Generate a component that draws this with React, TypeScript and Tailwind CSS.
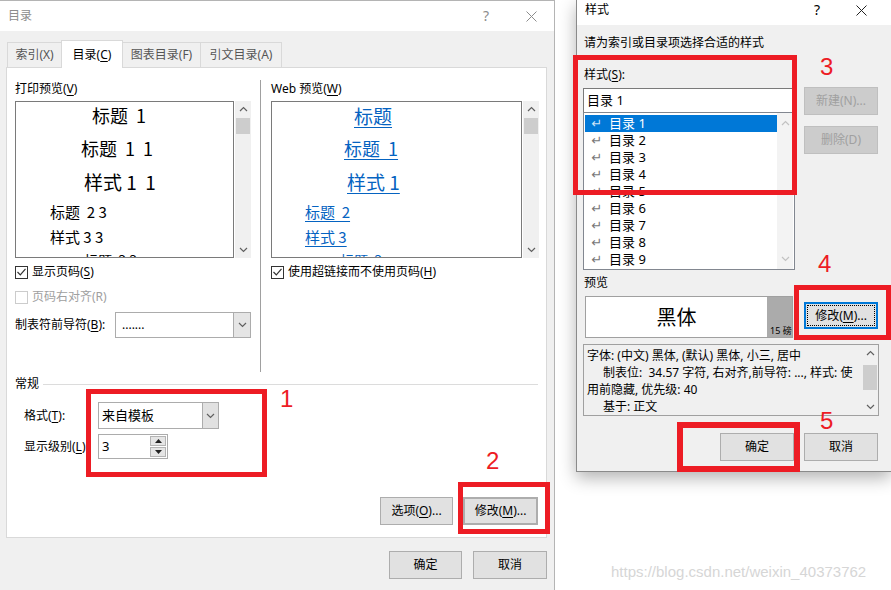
import React from "react";

type Dir = "up" | "down";

function Chevron({ dir, color = "#606060" }: { dir: Dir; color?: string }) {
  return (
    <svg width="9" height="6" viewBox="0 0 9 6">
      <polyline
        points={dir === "up" ? "1,5 4.5,1.5 8,5" : "1,1 4.5,4.5 8,1"}
        fill="none"
        stroke={color}
        strokeWidth="1.2"
      />
    </svg>
  );
}

function Close({ color }: { color: string }) {
  return (
    <svg width="11" height="11" viewBox="0 0 11 11">
      <path d="M0.5 0.5L10.5 10.5M10.5 0.5L0.5 10.5" stroke={color} strokeWidth="1" />
    </svg>
  );
}

function ScrollBar({
  thumb,
  arrow = "#606060",
  className = "",
}: {
  thumb?: string;
  arrow?: string;
  className?: string;
}) {
  return (
    <div className={`w-[16px] flex flex-col bg-[#f0f0f0] shrink-0 ${className}`}>
      <div className="h-[16px] flex items-center justify-center shrink-0">
        <Chevron dir="up" color={arrow} />
      </div>
      <div className="flex-1 flex flex-col items-center">
        {thumb && <div className={`w-[14px] bg-[#cdcdcd] ${thumb}`} />}
      </div>
      <div className="h-[16px] flex items-center justify-center shrink-0">
        <Chevron dir="down" color={arrow} />
      </div>
    </div>
  );
}

function Check({ checked, disabled }: { checked?: boolean; disabled?: boolean }) {
  return (
    <div
      className={`w-[13px] h-[13px] border bg-white flex items-center justify-center shrink-0 ${
        disabled ? "border-[#cccccc]" : "border-[#333333]"
      }`}
    >
      {checked && (
        <svg width="9" height="8" viewBox="0 0 9 8">
          <polyline points="0.5,4 3.3,6.8 8.5,0.8" fill="none" stroke="#333333" strokeWidth="1.2" />
        </svg>
      )}
    </div>
  );
}

function Btn({
  children,
  className = "",
  disabled,
}: {
  children: React.ReactNode;
  className?: string;
  disabled?: boolean;
}) {
  const look = disabled
    ? "bg-[#cccccc] border-[#bfbfbf] text-[#a0a0a0]"
    : "bg-[#e1e1e1] border-[#adadad] text-black";
  return (
    <div
      className={`h-[28px] flex items-center justify-center border text-[12px] leading-none shrink-0 ${look} ${className}`}
    >
      {children}
    </div>
  );
}

const U = ({ c }: { c: string }) => <span className="underline underline-offset-2">{c}</span>;

const line = "shrink-0 flex items-center";
// last preview line: only the top of the glyphs shows above the box edge
const cutLine = "shrink-0 flex items-start overflow-hidden h-[13px] pt-[9px]";

function LeftDialog() {
  return (
    <div className="w-[555px] h-[590px] shrink-0 flex flex-col bg-[#f0f0f0] border-t border-r border-[#b4b4b4]">
      {/* title */}
      <div className="h-[30px] bg-white flex items-center pl-[8px] pr-[13px] text-[12px] text-[#8c8c8c]">
        <span className="flex-1 leading-none">目录</span>
        <span className="w-[20px] text-center text-[14px] leading-none">?</span>
        <span className="w-[20px] ml-[25px] flex justify-center">
          <Close color="#8c8c8c" />
        </span>
      </div>

      {/* tabs */}
      <div className="h-[36px] flex items-end pl-[7px] text-[12px] leading-none">
        <div className="h-[25px] w-[55px] border border-b-0 border-[#d9d9d9] flex items-center justify-center text-[#555555]">
          索引(X)
        </div>
        <div className="h-[28px] w-[62px] -ml-px -mb-px relative z-10 border border-b-0 border-[#d9d9d9] bg-white flex items-center justify-center text-black">
          目录(<U c="C" />)
        </div>
        <div className="h-[25px] w-[79px] -ml-px border border-b-0 border-[#d9d9d9] flex items-center justify-center text-[#555555]">
          图表目录(F)
        </div>
        <div className="h-[25px] w-[82px] -ml-px border border-b-0 border-[#d9d9d9] flex items-center justify-center text-[#555555]">
          引文目录(A)
        </div>
      </div>

      {/* panel */}
      <div className="ml-[6px] w-[541px] h-[471px] bg-white border border-[#d9d9d9] flex flex-col text-[12px] text-black">
        <div className="flex h-[304px]">
          {/* print preview column */}
          <div className="ml-[8px] w-[236px] pt-[13px] flex flex-col">
            <div className="h-[16px] leading-[16px]">
              打印预览(<U c="V" />)
            </div>
            <div className="mt-[4px] flex h-[157px]">
              <div className="w-[219px] border border-[#7a7a7a] overflow-hidden flex flex-col font-['Noto_Sans_CJK_SC',sans-serif] leading-none">
                <div className={`${line} h-[26px] pl-[76px] text-[18px]`}>标题&nbsp; 1</div>
                <div className={`${line} h-[40px] pl-[65px] text-[18px]`}>标题&nbsp; 1&nbsp; 1</div>
                <div className={`${line} h-[26px] pl-[68px] text-[19px]`}>样式 1&nbsp; 1</div>
                <div className={`${line} h-[34px] pl-[34px] text-[15px]`}>标题&nbsp; 2 3</div>
                <div className={`${line} h-[16px] pl-[34px] text-[15px]`}>样式 3 3</div>
                <div className={`${cutLine} pl-[68px] text-[14px]`}>标题&nbsp; 3 3</div>
              </div>
              <ScrollBar className="ml-[1px]" thumb="mt-[1px] h-[16px]" />
            </div>
            <div className="mt-[6px] h-[16px] flex items-center gap-[4px] leading-none">
              <Check checked />
              <span>
                显示页码(<U c="S" />)
              </span>
            </div>
            <div className="mt-[9px] h-[16px] flex items-center gap-[4px] leading-none text-[#a0a0a0]">
              <Check disabled />
              <span>页码右对齐(R)</span>
            </div>
            <div className="mt-[7px] h-[26px] flex items-center leading-none">
              <span className="w-[100px]">
                制表符前导符(<U c="B" />):
              </span>
              <div className="w-[136px] h-[26px] border border-[#acacac] bg-white flex">
                <span className="flex-1 pl-[6px] flex items-center">.......</span>
                <div className="w-[17px] bg-[#e5e5e5] border-l border-[#acacac] flex items-center justify-center">
                  <Chevron dir="down" color="#606060" />
                </div>
              </div>
            </div>
          </div>

          <div className="ml-[9px] mt-[12px] w-px h-[292px] bg-[#a0a0a0]" />

          {/* web preview column */}
          <div className="ml-[10px] w-[268px] pt-[13px] flex flex-col">
            <div className="h-[16px] leading-[16px]">
              Web 预览(<U c="W" />)
            </div>
            <div className="mt-[4px] flex h-[157px]">
              <div className="w-[251px] border border-[#7a7a7a] overflow-hidden flex flex-col font-['Noto_Sans_CJK_SC',sans-serif] leading-none text-[#0563c1]">
                <div className={`${line} h-[26px] pl-[82px] text-[19px]`}>
                  <span className="underline underline-offset-3">标题</span>
                </div>
                <div className={`${line} h-[40px] pl-[72px] text-[18px]`}>
                  <span className="underline underline-offset-3">标题&nbsp; 1</span>
                </div>
                <div className={`${line} h-[26px] pl-[75px] text-[19px]`}>
                  <span className="underline underline-offset-3">样式 1</span>
                </div>
                <div className={`${line} h-[34px] pl-[33px] text-[15px]`}>
                  <span className="underline underline-offset-3">标题&nbsp; 2</span>
                </div>
                <div className={`${line} h-[16px] pl-[33px] text-[15px]`}>
                  <span className="underline underline-offset-3">样式 3</span>
                </div>
                <div className={`${cutLine} pl-[68px] text-[14px]`}>
                  <span className="underline underline-offset-3">标题&nbsp; 3</span>
                </div>
              </div>
              <ScrollBar className="ml-[1px]" thumb="mt-[1px] h-[16px]" />
            </div>
            <div className="mt-[6px] h-[16px] flex items-center gap-[4px] leading-none">
              <Check checked />
              <span>
                使用超链接而不使用页码(<U c="H" />)
              </span>
            </div>
          </div>
        </div>

        {/* general */}
        <div className="mt-[4px] h-[16px] flex items-center pl-[8px] leading-none">
          <span>常规</span>
          <div className="flex-1 h-px bg-[#dcdcdc] ml-[4px] mr-[8px]" />
        </div>
        <div className="mt-[10px] h-[27px] flex items-center pl-[17px] leading-none">
          <span className="w-[74px]">
            格式(<U c="T" />):
          </span>
          <div className="w-[121px] h-[27px] border border-[#acacac] bg-white flex">
            <span className="flex-1 pl-[3px] flex items-center text-[13px]">来自模板</span>
            <div className="w-[16px] bg-[#e1e1e1] border-l border-[#acacac] flex items-center justify-center">
              <Chevron dir="down" color="#606060" />
            </div>
          </div>
        </div>
        <div className="mt-[5px] h-[25px] flex items-center pl-[17px] leading-none">
          <span className="w-[74px]">
            显示级别(<U c="L" />):
          </span>
          <div className="w-[70px] h-[25px] border border-[#acacac] bg-white flex">
            <span className="flex-1 pl-[3px] flex items-center text-[13px]">3</span>
            <div className="w-[16px] my-[1px] mr-[1px] flex flex-col gap-px">
              <div className="flex-1 bg-[#e5e5e5] border border-[#b4b4b4] flex items-center justify-center">
                <svg width="7" height="4" viewBox="0 0 7 4">
                  <polygon points="0,4 3.5,0 7,4" fill="#222222" />
                </svg>
              </div>
              <div className="flex-1 bg-[#e5e5e5] border border-[#b4b4b4] flex items-center justify-center">
                <svg width="7" height="4" viewBox="0 0 7 4">
                  <polygon points="0,0 3.5,4 7,0" fill="#222222" />
                </svg>
              </div>
            </div>
          </div>
        </div>

        <div className="mt-[38px] flex justify-end gap-[10px] pr-[8px]">
          <Btn className="w-[73px]">
            选项(<U c="O" />)...
          </Btn>
          <Btn className="w-[75px] border-2 border-[#0078d7]">
            修改(<U c="M" />)...
          </Btn>
        </div>
      </div>

      <div className="mt-[13px] flex justify-end gap-[11px] pr-[7px]">
        <Btn className="w-[73px]">确定</Btn>
        <Btn className="w-[74px]">取消</Btn>
      </div>
    </div>
  );
}

function RightDialog() {
  const items = [1, 2, 3, 4, 5, 6, 7, 8, 9];
  return (
    <div className="w-[315px] h-[472px] shrink-0 flex flex-col bg-[#f0f0f0] border-l border-b border-[#8a8a8a] shadow-[0_6px_16px_rgba(0,0,0,0.3)] text-[12px] text-black">
      <div className="h-[25px] bg-white flex items-start pt-[2px] pl-[8px] pr-[20px] leading-[16px]">
        <span className="flex-1">样式</span>
        <span className="w-[20px] text-center text-[14px]">?</span>
        <span className="w-[20px] ml-[24px] h-[16px] flex items-center justify-center">
          <Close color="#222222" />
        </span>
      </div>

      <div className="flex flex-col pl-[7px] leading-none">
        <div className="mt-[10px] h-[16px] flex items-center">请为索引或目录项选择合适的样式</div>
        <div className="mt-[16px] h-[16px] flex items-center">
          样式(<U c="S" />):
        </div>

        <div className="mt-[5px] flex">
          <div className="-ml-px w-[212px] flex flex-col">
            <div className="w-[210px] h-[25px] border border-[#7a7a7a] bg-white flex items-center pl-[3px] text-[13px]">
              目录 1
            </div>
            <div className="-mt-px h-[158px] border border-[#828790] bg-white flex pl-px">
              <div className="w-[192px] pt-[2px] flex flex-col">
                {items.map((n) => (
                  <div
                    key={n}
                    className={`h-[17px] shrink-0 flex items-center ${n === 1 ? "bg-[#0078d7] text-white" : "text-black"}`}
                  >
                    <span
                      className={`w-[24px] text-center text-[13px] leading-none font-['DejaVu_Sans',sans-serif] ${
                        n === 1 ? "text-[#cfe3f6]" : "text-[#777777]"
                      }`}
                    >
                      ↵
                    </span>
                    <span className="text-[13px]">目录 {n}</span>
                  </div>
                ))}
              </div>
              <ScrollBar arrow="#c2c2c2" className="py-[2px] bg-[#f3f3f3]" />
            </div>
          </div>
          <div className="ml-[9px] flex flex-col">
            <Btn disabled className="-mt-px w-[74px]">
              新建(N)...
            </Btn>
            <Btn disabled className="mt-[11px] w-[74px]">
              删除(D)
            </Btn>
          </div>
        </div>

        <div className="mt-[5px] h-[16px] flex items-center">预览</div>

        <div className="mt-[5px] flex">
          <div className="ml-[1px] w-[208px] h-[42px] border border-[#a0a0a0] bg-white flex">
            <div className="flex-1 flex items-center justify-center text-[20px] font-['Noto_Sans_CJK_SC',sans-serif]">
              黑体
            </div>
            <div className="w-[25px] bg-[#ababab] flex items-end pl-[3px] pb-[2px] text-[9px] text-black">15 磅</div>
          </div>
          <div className="ml-[11px] mt-[6px] w-[74px] h-[27px] border-2 border-[#0078d7] bg-[#e1e1e1] p-[1px]">
            <div className="h-full border border-dotted border-black flex items-center justify-center">
              修改(<U c="M" />)...
            </div>
          </div>
        </div>

        <div className="mt-[6px] -ml-px w-[296px] h-[72px] border border-[#a0a0a0] bg-[#f0f0f0] flex">
          <div className="flex-1 pl-[3px] pt-[2px] leading-[17px] overflow-hidden whitespace-nowrap">
            <div>字体: (中文) 黑体, (默认) 黑体, 小三, 居中</div>
            <div className="pl-[16px]">制表位:&nbsp; 34.57 字符, 右对齐,前导符: ..., 样式: 使</div>
            <div>用前隐藏, 优先级: 40</div>
            <div className="pl-[16px]">基于: 正文</div>
          </div>
          <ScrollBar thumb="mt-[4px] h-[25px]" />
        </div>

        <div className="mt-[17px] ml-[136px] flex gap-[10px]">
          <Btn className="w-[74px]">确定</Btn>
          <Btn className="w-[74px]">取消</Btn>
        </div>
      </div>
    </div>
  );
}

const box = "absolute border-[5px] border-[#ed1c24]";
const num = "absolute text-[24px] leading-none text-[#ed1c24] font-['Liberation_Sans',sans-serif]";

export default function App() {
  return (
    <div className="relative w-[891px] h-[590px] bg-white overflow-hidden flex font-['Noto_Sans','Noto_Sans_CJK_SC',sans-serif]">
      <LeftDialog />
      <div className="ml-[21px] flex flex-col">
        <RightDialog />
        <div className="mt-[91px] ml-[35px] text-[15px] leading-[18px] text-[#d6d6d6] font-['Liberation_Sans',sans-serif] whitespace-nowrap">
          https://blog.csdn.net/weixin_40373762
        </div>
      </div>

      {/* annotations */}
      <div className={`${box} left-[86px] top-[389px] w-[181px] h-[88px]`} />
      <div className={`${num} left-[280px] top-[387px]`}>1</div>
      <div className={`${box} left-[458px] top-[482px] w-[92px] h-[52px]`} />
      <div className={`${num} left-[486px] top-[449px]`}>2</div>
      <div className={`${box} left-[573px] top-[55px] w-[224px] h-[140px]`} />
      <div className={`${num} left-[820px] top-[55px]`}>3</div>
      <div className={`${box} left-[794px] top-[285px] w-[97px] h-[55px]`} />
      <div className={`${num} left-[818px] top-[252px]`}>4</div>
      <div className={`${box} left-[677px] top-[422px] w-[123px] h-[50px] border-[6px]`} />
      <div className={`${num} left-[820px] top-[409px]`}>5</div>
    </div>
  );
}
